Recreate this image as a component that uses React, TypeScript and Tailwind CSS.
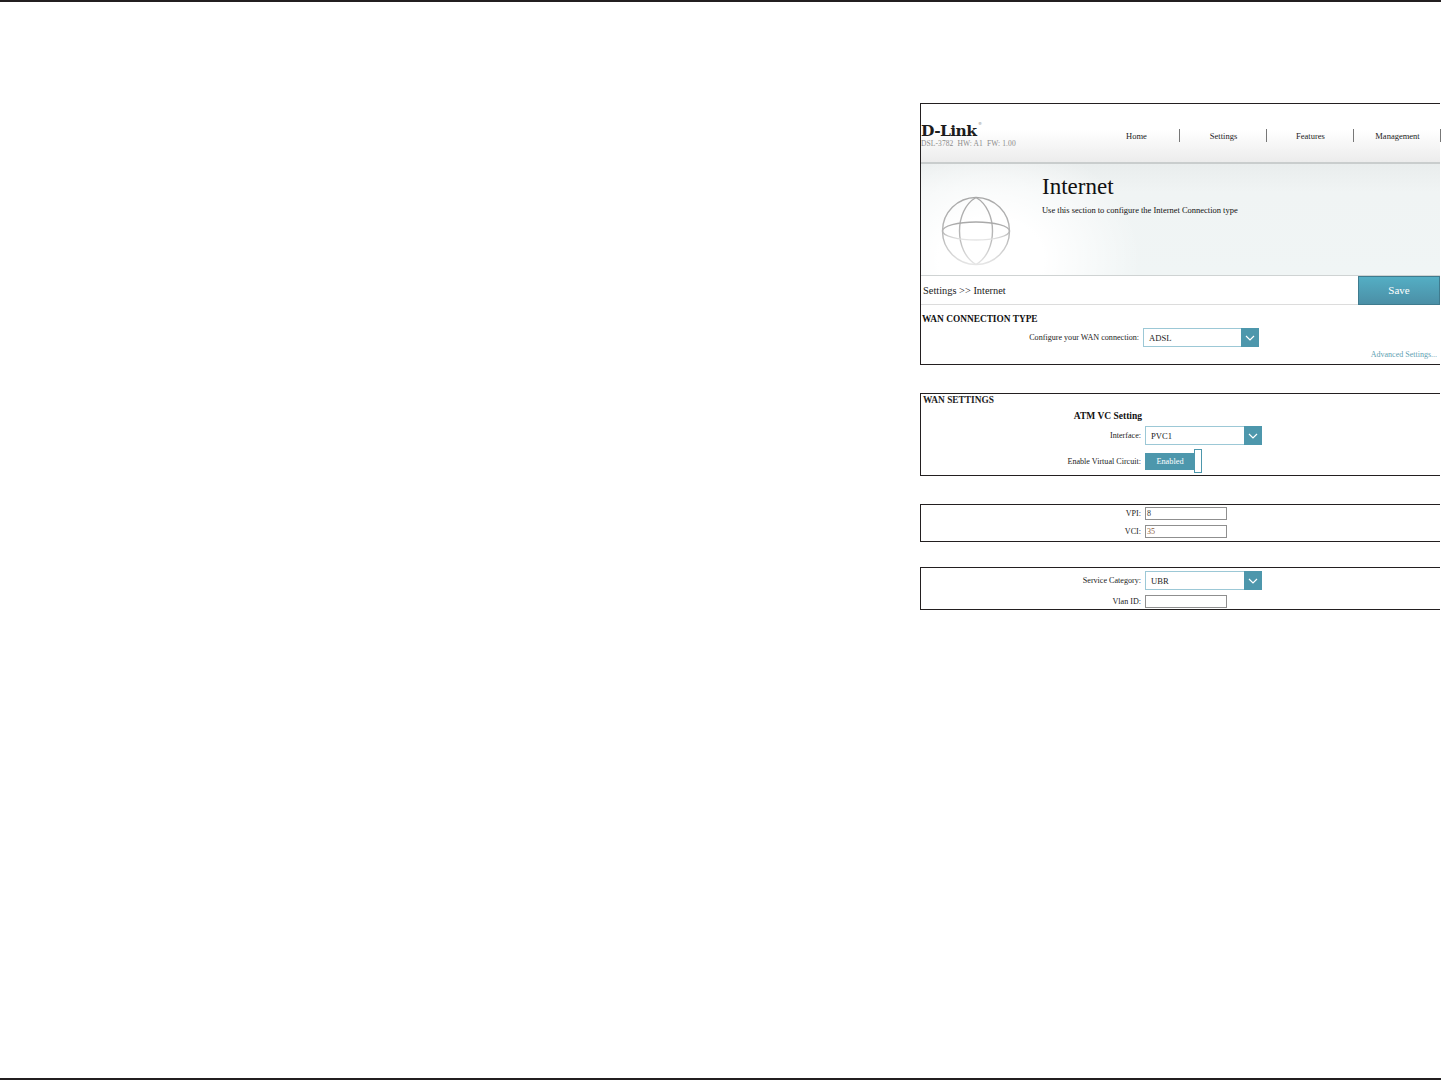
import type React from "react";

const serif = "font-['Liberation_Serif',serif]";

const Chevron: React.FC = () => (
	<svg width="10" height="6" viewBox="0 0 10 6" fill="none" aria-hidden="true">
		<path d="M1 1l4 4 4-4" stroke="#ffffff" strokeWidth="1.2" />
	</svg>
);

const Select: React.FC<{ value: string; width?: string }> = ({ value, width }) => (
	<div className={`flex h-[19px] ${width ?? "w-[117px]"} bg-white`}>
		<span className="flex-1 border border-r-0 border-[#9cc8d6] pl-[5px] text-[8.6px] leading-[19px] text-[#222]">
			{value}
		</span>
		<span className="flex w-[18px] items-center justify-center bg-[#4d97ac]">
			<Chevron />
		</span>
	</div>
);

const Field: React.FC<{ value?: string; color?: string }> = ({ value, color }) => (
	<div
		className={`h-[13px] w-[82px] border border-[#8f8f8f] bg-white pl-[1px] text-[8px] leading-[11px] ${color ?? "text-[#333]"}`}
	>
		{value}
	</div>
);

const Row: React.FC<{
	label: string;
	children: React.ReactNode;
	className?: string;
	width?: string;
	labelPad?: string;
}> = ({ label, children, className, width, labelPad }) => (
	<div className={`flex items-center ${className ?? ""}`}>
		<span
			className={`${width ?? "w-[224px]"} ${labelPad ?? "pt-[2px]"} shrink-0 pr-[4px] text-right text-[8.1px] text-[#222]`}
		>
			{label}
		</span>
		{children}
	</div>
);

const Globe: React.FC = () => (
	<svg width="70" height="70" viewBox="0 0 70 70" fill="none" aria-hidden="true">
		<defs>
			<linearGradient id="globeStroke" x1="0" y1="0" x2="0" y2="1">
				<stop offset="0" stopColor="#a9a9a9" />
				<stop offset="0.6" stopColor="#b8b8b8" />
				<stop offset="1" stopColor="#e6e6e6" />
			</linearGradient>
		</defs>
		<g stroke="url(#globeStroke)" strokeWidth="1.4">
			<circle cx="35" cy="35" r="33.5" />
			<path d="M35 1.5C13 14 13 56 35 68.5C57 56 57 14 35 1.5Z" />
			<ellipse cx="35" cy="35" rx="33.5" ry="9" />
			<path d="M35 1.5v67" />
		</g>
	</svg>
);

const navItems = ["Home", "Settings", "Features", "Management"];

const App: React.FC = () => {
	return (
		<div className={`flex h-[1080px] w-full flex-col justify-between bg-white ${serif}`}>
			<div className="h-[2px] bg-[#231f20]" />
			<main className="flex flex-1 flex-col items-end pt-[101px] pr-[1px]">
				<div className="flex w-[520px] flex-col">
					{/* main panel */}
					<section className="h-[262px] border border-r-0 border-[#231f20]">
						<header className="flex h-[60px] border-b-2 border-[#c9cdcd] bg-[linear-gradient(#ffffff_0%,#ffffff_45%,#ececec_100%)]">
							<div className="w-[172px] shrink-0 pt-[19px]">
								<div className="relative h-[16px] w-[58px] text-[15.5px] leading-[16px] font-bold tracking-[-0.6px] text-[#1c1c1c] [font-family:'DejaVu_Serif',serif]">
									D-Link
									<span className="absolute top-[-2px] right-[-3px] text-[4px] leading-[6px] font-normal tracking-normal text-[#777]">
										®
									</span>
								</div>
								<div className="text-[7.5px] leading-[10px] tracking-[0.1px] whitespace-nowrap text-[#8b8b8b]">
									DSL-3782&nbsp; HW: A1&nbsp; FW: 1.00
								</div>
							</div>
							<nav className="flex flex-1 items-start pt-[25px]">
								{navItems.map((item) => (
									<div
										key={item}
										className="flex h-[13px] w-[87px] shrink-0 items-center justify-center border-r border-[#777] pt-[1px] pl-[1px] text-[8.5px] text-[#222]"
									>
										{item}
									</div>
								))}
							</nav>
						</header>
						<div className="flex h-[112px] border-b border-[#cfd3d3] bg-[radial-gradient(ellipse_150px_120px_at_70px_95px,#ffffff_0%,#ffffff_35%,rgba(255,255,255,0)_100%),linear-gradient(#e9eded_0%,#f0f4f4_25%,#f0f5f5_100%)]">
							<div className="w-[121px] shrink-0 pt-[32px] pl-[20px]">
								<Globe />
							</div>
							<div className="pt-[9px]">
								<h1 className="text-[23px] leading-[27px] font-normal text-[#111]">Internet</h1>
								<p className="mt-[5px] text-[8.47px] leading-[11px] whitespace-nowrap text-[#111]">
									Use this section to configure the Internet Connection type
								</p>
							</div>
						</div>
						<div className="flex h-[29px] border-b border-[#dcdcdc]">
							<div className="flex-1 pl-[2px] text-[10.4px] leading-[29px] text-[#222]">Settings &gt;&gt; Internet</div>
							<button
								type="button"
								className="h-[29px] w-[82px] border border-[#3f7b8e] bg-[linear-gradient(#54aec4,#4b8fa6)] text-[11px] text-white"
							>
								Save
							</button>
						</div>
						<div className="relative">
							<h2 className="pt-[8px] pl-[1px] text-[9.35px] leading-[13px] font-bold text-[#111]">
								WAN CONNECTION TYPE
							</h2>
							<Row label="Configure your WAN connection:" width="w-[222px]" className="mt-[2px]">
								<Select value="ADSL" width="w-[116px]" />
							</Row>
							<a className="absolute top-[44px] right-[3px] text-[8px] text-[#5f9fb3]">Advanced Settings...</a>
						</div>
					</section>

					<section className="mt-[28px] h-[83px] border border-r-0 border-[#231f20]">
						<h2 className="pt-[1px] pl-[2px] text-[9.35px] leading-[11px] font-bold text-[#222]">WAN SETTINGS</h2>
						<div className="w-[221px] pt-[4px] text-right text-[9.5px] leading-[13px] font-bold text-[#111]">
							ATM VC Setting
						</div>
						<Row label="Interface:" className="mt-[3px]">
							<Select value="PVC1" />
						</Row>
						<Row label="Enable Virtual Circuit:" className="mt-[4px]">
							<div className="flex h-[24px] items-center">
								<span className="h-[17px] w-[50px] bg-[#4d97ac] text-center text-[8.3px] leading-[17px] text-white">
									Enabled
								</span>
								<span className="-ml-px h-[24px] w-[8px] border border-[#4d97ac] bg-white" />
							</div>
						</Row>
					</section>

					<section className="mt-[28px] h-[38px] border border-r-0 border-[#231f20] pt-[2px]">
						<Row label="VPI:" labelPad="pt-[1px]">
							<Field value="8" />
						</Row>
						<Row label="VCI:" labelPad="pt-[1px]" className="mt-[5px]">
							<Field value="35" color="text-[#8a5a3c]" />
						</Row>
					</section>

					<section className="mt-[25px] h-[43px] border border-r-0 border-[#231f20] pt-[3px]">
						<Row label="Service Category:">
							<Select value="UBR" />
						</Row>
						<Row label="Vlan ID:" labelPad="pt-[1px]" className="mt-[5px]">
							<Field />
						</Row>
					</section>
				</div>
			</main>
			<div className="h-[2px] bg-[#231f20]" />
		</div>
	);
};

export default App;
